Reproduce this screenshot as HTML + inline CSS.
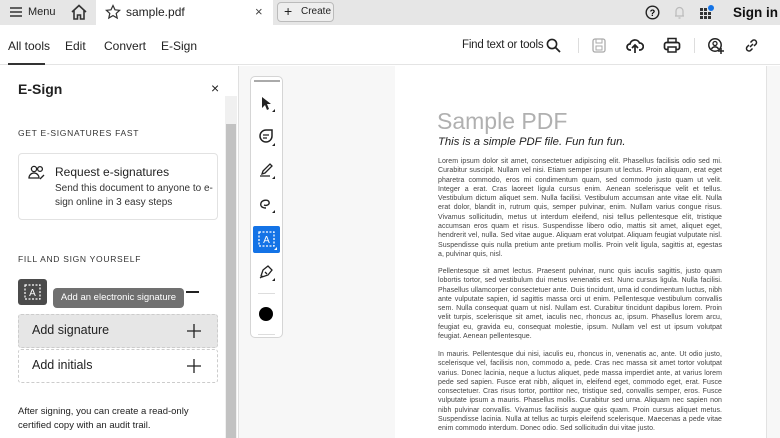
<!DOCTYPE html>
<html><head><meta charset="utf-8"><style>
*{margin:0;padding:0;box-sizing:border-box}
body{width:780px;height:438px;overflow:hidden;font-family:"Liberation Sans",sans-serif;color:#222;background:#fff;position:relative}
.abs{position:absolute}
.top{left:0;top:0;width:780px;height:25px;background:#e6e6e6}
.tab{left:96px;top:0;width:177px;height:25px;background:#fff}
.bar2{left:0;top:25px;width:780px;height:40px;background:#fff;border-bottom:1px solid #e4e4e4}
.t{font-size:12px;color:#222}
.canvas{left:238px;top:66px;width:542px;height:372px;background:#f7f7f7;border-left:1px solid #e0e0e0}
.page{left:395px;top:66px;width:371px;height:372px;background:#fff}
.pdf{font-size:7px;line-height:9.3px;color:#444;text-align:justify;width:284px;left:438px;letter-spacing:0.05px}
.rail{left:250px;top:76px;width:33px;height:262px;border:1px solid #d5d5d5;border-radius:5px;background:#fff}
.card{border:1px solid #e2e2e2;border-radius:4px}
</style></head><body>
<div class="abs top"></div>
<div class="abs tab"></div>
<svg class="abs" style="left:9px;top:6px" width="14" height="12"><path d="M1 2h12M1 6h12M1 10h12" stroke="#333" stroke-width="1.4"/></svg>
<div class="abs" style="left:28px;top:6px;font-size:11px">Menu</div>
<svg class="abs" style="left:70px;top:3px" width="18" height="18"><path d="M2 9L9 2.5 16 9M4 7.5V16h3.5v-4h3v4H14V7.5" fill="none" stroke="#333" stroke-width="1.6"/></svg>
<svg class="abs" style="left:105px;top:4px" width="16" height="16"><path d="M8 1.5l2 4.3 4.6.5-3.4 3.1 1 4.6L8 11.6 3.8 14l1-4.6L1.4 6.3 6 5.8z" fill="none" stroke="#333" stroke-width="1.2"/></svg>
<div class="abs" style="left:126px;top:5px;font-size:12px">sample.pdf</div>
<div class="abs" style="left:255px;top:4px;font-size:13px;color:#444">×</div>
<div class="abs" style="left:277px;top:2px;width:57px;height:20px;border:1px solid #bbb;border-radius:4px;background:#eee"></div>
<div class="abs" style="left:284px;top:3px;font-size:14px">+</div>
<div class="abs" style="left:301px;top:6px;font-size:10px">Create</div>
<svg class="abs" style="left:645px;top:5px" width="15" height="15"><circle cx="7.5" cy="7.5" r="6.3" fill="none" stroke="#222" stroke-width="1.4"/><text x="7.5" y="11" font-size="9" text-anchor="middle" font-family="Liberation Sans" font-weight="bold">?</text></svg>
<svg class="abs" style="left:673px;top:5px" width="13" height="15"><path d="M2 11h9M3 11V6a3.5 3.5 0 017 0v5M5.5 13h2" fill="none" stroke="#bbb" stroke-width="1.2"/></svg>
<svg class="abs" style="left:699px;top:4px" width="16" height="16"><g fill="#333"><rect x="1" y="4" width="3" height="3"/><rect x="5" y="4" width="3" height="3"/><rect x="1" y="8" width="3" height="3"/><rect x="5" y="8" width="3" height="3"/><rect x="9" y="8" width="3" height="3"/><rect x="1" y="12" width="3" height="3"/><rect x="5" y="12" width="3" height="3"/><rect x="9" y="12" width="3" height="3"/></g><circle cx="12" cy="4" r="3" fill="#1473e6"/></svg>
<div class="abs" style="left:733px;top:5px;font-size:13.5px;font-weight:bold;color:#111">Sign in</div>

<div class="abs bar2"></div>
<div class="abs t" style="left:8px;top:39px">All tools</div>
<div class="abs" style="left:8px;top:63px;width:37px;height:2px;background:#333"></div>
<div class="abs t" style="left:65px;top:39px">Edit</div>
<div class="abs t" style="left:104px;top:39px">Convert</div>
<div class="abs t" style="left:161px;top:39px">E-Sign</div>
<div class="abs" style="left:462px;top:39px;font-size:11.5px;letter-spacing:-0.2px">Find text or tools</div>
<svg class="abs" style="left:546px;top:38px" width="15" height="15"><circle cx="6" cy="6" r="4.6" fill="none" stroke="#222" stroke-width="1.6"/><path d="M9.5 9.5L14 14" stroke="#222" stroke-width="1.8"/></svg>
<div class="abs" style="left:578px;top:38px;width:1px;height:15px;background:#ddd"></div>
<svg class="abs" style="left:592px;top:38px" width="14" height="15"><rect x="1" y="1" width="12" height="13" rx="2" fill="none" stroke="#aaa" stroke-width="1.3"/><rect x="4" y="1" width="6" height="4" fill="none" stroke="#aaa"/><rect x="4" y="8" width="6" height="4" fill="none" stroke="#aaa"/></svg>
<svg class="abs" style="left:626px;top:37px" width="18" height="17"><path d="M5 13H4a3 3 0 010-6 5 5 0 019.5-1A3.5 3.5 0 0114 13h-1M9 16V8M6 11l3-3 3 3" fill="none" stroke="#222" stroke-width="1.7"/></svg>
<svg class="abs" style="left:663px;top:37px" width="18" height="17"><rect x="5" y="1.5" width="8" height="4" fill="none" stroke="#222" stroke-width="1.5"/><rect x="1.5" y="5.5" width="15" height="7" rx="2" fill="none" stroke="#222" stroke-width="1.7"/><rect x="5" y="10" width="8" height="5" fill="#fff" stroke="#222" stroke-width="1.5"/></svg>
<div class="abs" style="left:694px;top:38px;width:1px;height:15px;background:#ddd"></div>
<svg class="abs" style="left:707px;top:37px" width="18" height="18"><circle cx="8" cy="8" r="6.2" fill="none" stroke="#222" stroke-width="1.5"/><circle cx="8" cy="6.5" r="2" fill="none" stroke="#222" stroke-width="1.3"/><path d="M4.5 12a4 4 0 017 0M14 11v6M11 14h6" fill="none" stroke="#222" stroke-width="1.5"/></svg>
<svg class="abs" style="left:744px;top:38px" width="15" height="15"><path d="M6 9l3-3M5 7L3 9a2.5 2.5 0 003.5 3.5L8.5 10.5M10 8l2-2a2.5 2.5 0 00-3.5-3.5L6.5 4.5" fill="none" stroke="#222" stroke-width="1.5"/></svg>

<!-- left panel -->
<div class="abs" style="left:18px;top:81px;font-size:14px;font-weight:bold;color:#222">E-Sign</div>
<div class="abs" style="left:211px;top:80px;font-size:14px">×</div>
<div class="abs" style="left:225px;top:96px;width:12px;height:342px;background:#f0f0f0"></div>
<div class="abs" style="left:226px;top:124px;width:10px;height:314px;background:#c2c2c2"></div>
<div class="abs" style="left:18px;top:128px;font-size:8.5px;letter-spacing:.7px;color:#333">GET E-SIGNATURES FAST</div>
<div class="abs card" style="left:18px;top:153px;width:200px;height:67px"></div>
<svg class="abs" style="left:28px;top:165px" width="18" height="16"><circle cx="6" cy="4" r="2.6" fill="none" stroke="#222" stroke-width="1.3"/><circle cx="12" cy="4" r="2.4" fill="none" stroke="#222" stroke-width="1.3"/><path d="M1 13a5 5 0 0110 0zM12 14l4-4" fill="none" stroke="#222" stroke-width="1.3"/></svg>
<div class="abs" style="left:55px;top:165px;font-size:12px;color:#222">Request e-signatures</div>
<div class="abs" style="left:55px;top:182px;font-size:10px;line-height:13.5px;color:#333;width:160px">Send this document to anyone to e-sign online in 3 easy steps</div>
<div class="abs" style="left:18px;top:254px;font-size:8.5px;letter-spacing:.7px;color:#333">FILL AND SIGN YOURSELF</div>
<div class="abs" style="left:18px;top:279px;width:29px;height:26px;background:#4b4b4b;border-radius:3px"></div>
<svg class="abs" style="left:24px;top:284px" width="17" height="16"><rect x="1" y="1" width="15" height="14" fill="none" stroke="#fff" stroke-width="1.2" stroke-dasharray="2 1.5"/><text x="8.5" y="12" font-size="10" fill="#fff" text-anchor="middle" font-family="Liberation Sans">A</text></svg>
<div class="abs" style="left:186px;top:291px;width:13px;height:1.5px;background:#222"></div>
<div class="abs" style="left:53px;top:288px;width:131px;height:20px;background:#707070;border-radius:4px;color:#fff;font-size:9.5px;line-height:20px;text-align:center">Add an electronic signature</div>
<div class="abs" style="left:18px;top:314px;width:200px;height:34px;background:#e6e6e6;border:1px dashed #ccc;border-radius:3px"></div>
<div class="abs" style="left:32px;top:323px;font-size:12.5px">Add signature</div>
<svg class="abs" style="left:187px;top:324px" width="14" height="14"><path d="M7 0v14M0 7h14" stroke="#222" stroke-width="1.3"/></svg>
<div class="abs" style="left:18px;top:349px;width:200px;height:34px;border:1px dashed #ccc;border-radius:3px"></div>
<div class="abs" style="left:32px;top:358px;font-size:12.5px">Add initials</div>
<svg class="abs" style="left:187px;top:359px" width="14" height="14"><path d="M7 0v14M0 7h14" stroke="#222" stroke-width="1.3"/></svg>
<div class="abs" style="left:18px;top:405px;font-size:9.5px;line-height:14px;color:#222;width:200px">After signing, you can create a read-only certified copy with an audit trail.</div>

<!-- canvas -->
<div class="abs canvas"></div>
<div class="abs" style="left:766px;top:66px;width:1px;height:372px;background:#e2e2e2"></div>
<div class="abs page"></div>
<div class="abs rail"></div>
<div class="abs" style="left:254px;top:80px;width:26px;height:2px;background:#aaa"></div>
<svg class="abs" style="left:258px;top:95px" width="18" height="18"><path d="M4 2v11l3-3 2 5 2-1-2-5h4z" fill="#222"/><path d="M17 14v3h-3z" fill="#222"/></svg>
<svg class="abs" style="left:258px;top:128px" width="18" height="18"><path d="M8 2a6 6 0 106 6V2z" fill="none" stroke="#222" stroke-width="1.5"/><path d="M5 7h6M5 10h4" stroke="#222" stroke-width="1.3"/><path d="M17 15v3h-3z" fill="#222"/></svg>
<svg class="abs" style="left:258px;top:161px" width="18" height="18"><path d="M4 13l1-3 7-7 2 2-7 7z M2 15h10" fill="none" stroke="#222" stroke-width="1.3"/><path d="M17 15v3h-3z" fill="#222"/></svg>
<svg class="abs" style="left:258px;top:195px" width="18" height="18"><path d="M8 13c-4 0-6-2-5-5s7-4 8-1-3 4-5 3" fill="none" stroke="#222" stroke-width="1.4"/><path d="M17 15v3h-3z" fill="#222"/></svg>
<div class="abs" style="left:253px;top:226px;width:27px;height:27px;background:#1473e6;border-radius:2px"></div>
<svg class="abs" style="left:257px;top:230px" width="20" height="20"><rect x="2" y="2" width="15" height="14" fill="none" stroke="#fff" stroke-width="1.3" stroke-dasharray="2 1.5"/><text x="9.5" y="13" font-size="10" fill="#fff" text-anchor="middle" font-family="Liberation Sans">A</text><path d="M20 17v3h-3z" fill="#fff"/></svg>
<svg class="abs" style="left:258px;top:263px" width="18" height="18"><path d="M3 13l2-6 5-4 4 4-4 5-6 2zM7 9l2 2M2 15l3-2" fill="none" stroke="#222" stroke-width="1.3"/><path d="M17 15v3h-3z" fill="#222"/></svg>
<div class="abs" style="left:258px;top:293px;width:17px;height:1px;background:#ddd"></div>
<div class="abs" style="left:259px;top:307px;width:14px;height:14px;border-radius:50%;background:#000"></div>
<div class="abs" style="left:258px;top:334px;width:17px;height:1px;background:#ddd"></div>

<div class="abs" style="left:437px;top:108px;font-size:23px;color:#b0b0b0;font-weight:300">Sample PDF</div>
<div class="abs" style="left:438px;top:136px;font-size:11.3px;font-style:italic;color:#222">This is a simple PDF file. Fun fun fun.</div>
<div class="abs pdf" style="top:157px">Lorem ipsum dolor sit amet, consectetuer adipiscing elit. Phasellus facilisis odio sed mi. Curabitur suscipit. Nullam vel nisi. Etiam semper ipsum ut lectus. Proin aliquam, erat eget pharetra commodo, eros mi condimentum quam, sed commodo justo quam ut velit. Integer a erat. Cras laoreet ligula cursus enim. Aenean scelerisque velit et tellus. Vestibulum dictum aliquet sem. Nulla facilisi. Vestibulum accumsan ante vitae elit. Nulla erat dolor, blandit in, rutrum quis, semper pulvinar, enim. Nullam varius congue risus. Vivamus sollicitudin, metus ut interdum eleifend, nisi tellus pellentesque elit, tristique accumsan eros quam et risus. Suspendisse libero odio, mattis sit amet, aliquet eget, hendrerit vel, nulla. Sed vitae augue. Aliquam erat volutpat. Aliquam feugiat vulputate nisl. Suspendisse quis nulla pretium ante pretium mollis. Proin velit ligula, sagittis at, egestas a, pulvinar quis, nisl.</div>
<div class="abs pdf" style="top:267px">Pellentesque sit amet lectus. Praesent pulvinar, nunc quis iaculis sagittis, justo quam lobortis tortor, sed vestibulum dui metus venenatis est. Nunc cursus ligula. Nulla facilisi. Phasellus ullamcorper consectetuer ante. Duis tincidunt, urna id condimentum luctus, nibh ante vulputate sapien, id sagittis massa orci ut enim. Pellentesque vestibulum convallis sem. Nulla consequat quam ut nisl. Nullam est. Curabitur tincidunt dapibus lorem. Proin velit turpis, scelerisque sit amet, iaculis nec, rhoncus ac, ipsum. Phasellus lorem arcu, feugiat eu, gravida eu, consequat molestie, ipsum. Nullam vel est ut ipsum volutpat feugiat. Aenean pellentesque.</div>
<div class="abs pdf" style="top:350px">In mauris. Pellentesque dui nisi, iaculis eu, rhoncus in, venenatis ac, ante. Ut odio justo, scelerisque vel, facilisis non, commodo a, pede. Cras nec massa sit amet tortor volutpat varius. Donec lacinia, neque a luctus aliquet, pede massa imperdiet ante, at varius lorem pede sed sapien. Fusce erat nibh, aliquet in, eleifend eget, commodo eget, erat. Fusce consectetuer. Cras risus tortor, porttitor nec, tristique sed, convallis semper, eros. Fusce vulputate ipsum a mauris. Phasellus mollis. Curabitur sed urna. Aliquam nec sapien non nibh pulvinar convallis. Vivamus facilisis augue quis quam. Proin cursus aliquet metus. Suspendisse lacinia. Nulla at tellus ac turpis eleifend scelerisque. Maecenas a pede vitae enim commodo interdum. Donec odio. Sed sollicitudin dui vitae justo.</div>
</body></html>
